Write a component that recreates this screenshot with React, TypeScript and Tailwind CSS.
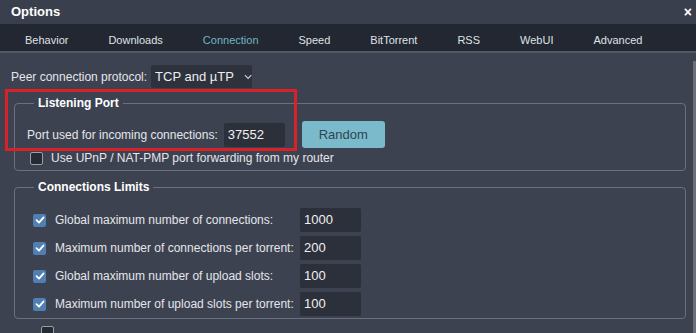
import React from "react";

const tabs = ["Behavior", "Downloads", "Connection", "Speed", "BitTorrent", "RSS", "WebUI", "Advanced"];

function Check({ checked }: { checked: boolean }) {
  if (checked) {
    return (
      <span className="flex h-[13px] w-[13px] shrink-0 items-center justify-center rounded-[2px] bg-[#4f7fb3]">
        <svg width="10" height="10" viewBox="0 0 10 10">
          <path d="M1.5 5.2 L4 7.6 L8.6 2.4" fill="none" stroke="#ffffff" strokeWidth="1.8" strokeLinecap="round" strokeLinejoin="round" />
        </svg>
      </span>
    );
  }
  return <span className="block h-[13px] w-[13px] shrink-0 rounded-[2px] border border-[#9a9ea8] bg-[#262a33]" />;
}

function NumInput({ value }: { value: string }) {
  return (
    <div className="flex h-[24px] w-[61px] items-center rounded-[2px] bg-[#2c303b] pl-[4px] text-[13px] text-[#f0f0f0]">
      {value}
    </div>
  );
}

const limits = [
  ["Global maximum number of connections:", "1000"],
  ["Maximum number of connections per torrent:", "200"],
  ["Global maximum number of upload slots:", "100"],
  ["Maximum number of upload slots per torrent:", "100"],
];

export default function App() {
  return (
    <div
      className="relative flex h-[333px] w-[696px] flex-col overflow-hidden bg-[#3d4251] text-[12px] text-[#e4e6ea]"
      style={{ fontFamily: '"Liberation Sans", Arial, sans-serif' }}
    >
      <div className="flex h-[24px] shrink-0 items-center justify-between bg-[#3a3f4d] pl-[11px] pr-[4px]">
        <span className="text-[13px] font-bold text-white">Options</span>
        <span className="text-[14px] font-bold leading-none text-white">×</span>
      </div>
      <div className="flex h-[29px] shrink-0 items-center border-b-2 border-[#555a67] bg-[#232731] pl-[5px] pt-[6px]">
        {tabs.map((t) => (
          <span key={t} className={`px-5 text-[11px] ${t === "Connection" ? "text-[#73b4c4]" : "text-[#dfe2e7]"}`}>
            {t}
          </span>
        ))}
      </div>
      <div className="relative flex flex-1 flex-col pl-[11px] pr-[10px]">
        <div className="absolute right-0 top-[8px] h-[300px] w-[3px] bg-[#6a6f7b]" />
        <div className="mt-[12px] flex items-center">
          <span className="whitespace-nowrap">Peer connection protocol:</span>
          <div className="ml-[4px] flex h-[23px] w-[101px] shrink-0 items-center whitespace-nowrap rounded-[2px] bg-[#2e323d] pl-[4px] text-[13px] text-[#eceef1]">
            <span>TCP and µTP</span>
            <svg className="ml-[10px]" width="9" height="6" viewBox="0 0 9 6">
              <path d="M1 1 L4.5 4.5 L8 1" fill="none" stroke="#d0d3d9" strokeWidth="1.2" />
            </svg>
          </div>
        </div>
        <fieldset className="ml-[3px] mt-[6px] h-[77px] w-[672px] rounded-[4px] border border-[#6b7080]">
          <legend className="ml-[19px] px-[4px] text-[12px] font-bold text-white">Listening Port</legend>
          <div className="ml-[12px] mt-[9px] flex items-center">
            <span>Port used for incoming connections:</span>
            <div className="ml-[6px]">
              <NumInput value="37552" />
            </div>
            <button className="ml-[17px] h-[27px] w-[83px] rounded-[3px] bg-[#7bbacb] text-[13px] text-[#2c4653]">Random</button>
          </div>
          <div className="ml-[15px] mt-[1px] flex items-center gap-[8px]">
            <Check checked={false} />
            <span>Use UPnP / NAT-PMP port forwarding from my router</span>
          </div>
        </fieldset>
        <fieldset className="ml-[3px] mt-[7px] h-[141px] w-[672px] rounded-[4px] border border-[#6b7080]">
          <legend className="ml-[19px] px-[4px] text-[12px] font-bold text-white">Connections Limits</legend>
          <div className="ml-[18px] mt-[12px] flex flex-col gap-[4px]">
            {limits.map(([l, v]) => (
              <div key={l} className="flex items-center">
                <Check checked />
                <span className="ml-[9px] w-[245px]">{l}</span>
                <NumInput value={v} />
              </div>
            ))}
          </div>
        </fieldset>
        <div className="ml-[30px] mt-[7px]">
          <Check checked={false} />
        </div>
        <div className="pointer-events-none absolute left-[5px] top-[36px] h-[62px] w-[292px] border-[3px] border-[#d8222a]" />
      </div>
    </div>
  );
}
